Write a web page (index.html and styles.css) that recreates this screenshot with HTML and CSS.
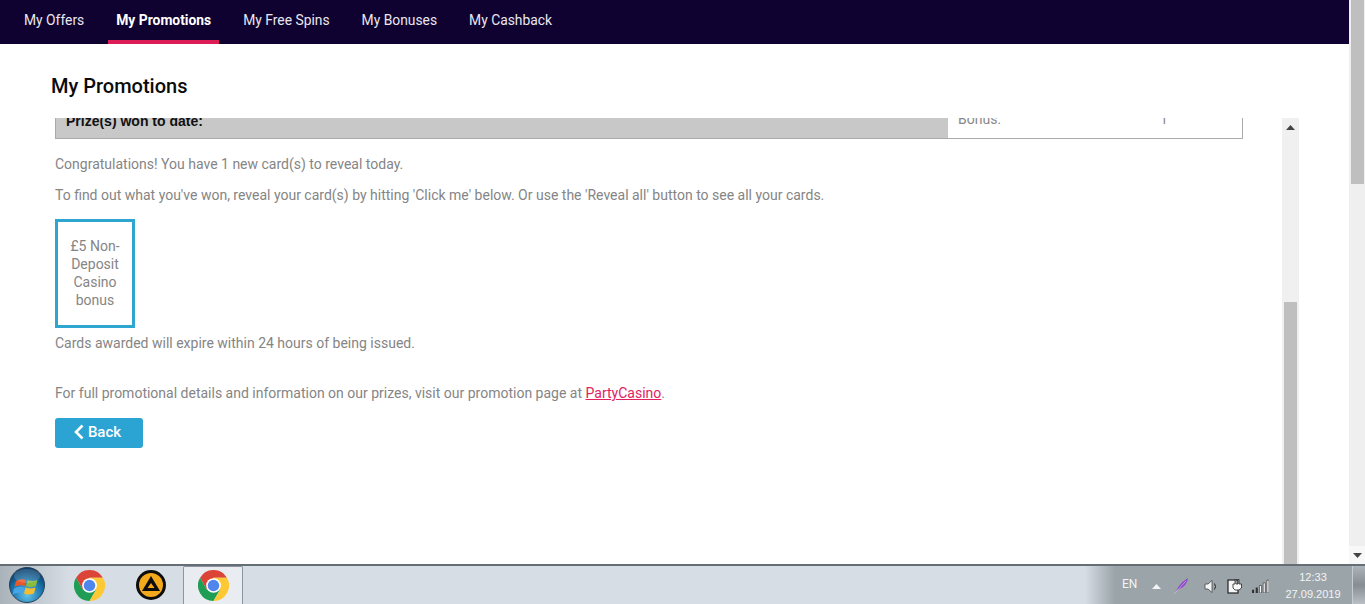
FILE: index.html
```html
<!DOCTYPE html>
<html lang="en">
<head>
<meta charset="utf-8">
<title>My Promotions</title>
<link rel="stylesheet" href="styles.css">
</head>
<body>
<svg class="defs" width="0" height="0" aria-hidden="true">
  <defs>
    <symbol id="chrome" viewBox="0 0 32 32">
      <path fill="#db4437" d="M2.14 8A16 16 0 0 1 29.86 8H16L9.07 20z"/>
      <path fill="#1f9d55" d="M2.14 8A16 16 0 0 0 16 32l6.93-12H9.07z"/>
      <path fill="#fcc934" d="M29.86 8A16 16 0 0 1 16 32l6.93-12L16 8z"/>
      <circle cx="16" cy="16" r="7.6" fill="#fff"/>
      <circle cx="16" cy="16" r="6" fill="#4f86ec"/>
    </symbol>
  </defs>
</svg>
<div class="window">
  <main class="main">
    <nav class="nav">
      <a class="nav-item">My Offers</a>
      <a class="nav-item active">My Promotions</a>
      <a class="nav-item">My Free Spins</a>
      <a class="nav-item">My Bonuses</a>
      <a class="nav-item">My Cashback</a>
    </nav>
    <h1 class="title">My Promotions</h1>
    <div class="panel">
      <div class="panel-body">
        <div class="summary">
          <div class="summary-label"><span>Prize(s) won to date:</span></div>
          <div class="summary-value"><span class="bonus">Bonus:</span><span class="count">1</span></div>
        </div>
        <p class="copy first">Congratulations! You have 1 new card(s) to reveal today.</p>
        <p class="copy second">To find out what you've won, reveal your card(s) by hitting 'Click me' below. Or use the 'Reveal all' button to see all your cards.</p>
        <div class="card">£5 Non-Deposit Casino bonus</div>
        <p class="copy expire">Cards awarded will expire within 24 hours of being issued.</p>
        <p class="copy details">For full promotional details and information on our prizes, visit our promotion page at <a class="link">PartyCasino</a>.</p>
        <button class="back" type="button">
          <svg class="back-icon" viewBox="0 0 10 16" width="10" height="16"><path d="M8.5 1.500 2 8l6.500 6.500" fill="none" stroke="#fff" stroke-width="2.600"/></svg>
          Back
        </button>
      </div>
      <div class="inner-scroll">
        <svg class="arrow-up" viewBox="0 0 9 5" width="9" height="5"><path d="M4.500 0 9 5H0z" fill="#444"/></svg>
        <div class="inner-thumb"></div>
      </div>
    </div>
  </main>
  <div class="outer-scroll">
    <div class="outer-thumb"></div>
    <div class="outer-arrow">
      <svg viewBox="0 0 9 5" width="9" height="5"><path d="M0 0h9L4.500 5z" fill="#444"/></svg>
    </div>
  </div>
</div>
<footer class="taskbar">
  <div class="start">
    <svg viewBox="0 0 38 38" width="38" height="38">
      <defs>
        <radialGradient id="orb" cx="50%" cy="78%" r="70%">
          <stop offset="0" stop-color="#62c3ea"/>
          <stop offset=".6" stop-color="#1c76ad"/>
          <stop offset="1" stop-color="#0b426f"/>
        </radialGradient>
      </defs>
      <circle cx="19" cy="19" r="17.500" fill="url(#orb)" stroke="#2a4055"/>
      <path d="M8 15q5-3 10-1l-1.500 6q-5-2-10 1z" fill="#e8562a"/>
      <path d="M19.500 14q5 2 10 0l-1.500 6q-5 2-10 0z" fill="#8abb3c"/>
      <path d="M6 22.500q5-3 10-1l-1.500 6q-5-2-10 1z" fill="#45a5e6"/>
      <path d="M17.500 21.500q5 2 10 0l-1.500 6q-5 2-10 0z" fill="#f6bb30"/>
      <ellipse cx="19" cy="10" rx="13" ry="7" fill="#fff" opacity=".16"/>
    </svg>
  </div>
  <div class="task"><svg width="31" height="31"><use href="#chrome"/></svg></div>
  <div class="task">
    <svg viewBox="0 0 30 30" width="30" height="30">
      <circle cx="15" cy="15" r="15" fill="#0d0d0d"/>
      <circle cx="15" cy="15" r="12" fill="#f4a81c"/>
      <path d="M15 6 24 21H6zM15 13l-3.500 5h7z" fill="#0d0d0d" fill-rule="evenodd"/>
    </svg>
  </div>
  <div class="task current"><svg width="31" height="31"><use href="#chrome"/></svg></div>
  <div class="tray">
    <span class="lang">EN</span>
    <svg class="tray-up" viewBox="0 0 9 5" width="9" height="5"><path d="M4.500 0 9 5H0z" fill="#f2f4f5"/></svg>
    <svg class="tray-feather" viewBox="0 0 16 16" width="16" height="16"><path d="M1 16 6 8q4-5 9-8-1 6-5 9-3 2-6 3z" fill="#8f45c9"/><path d="M1 16 13 3" stroke="#d8c2ea" stroke-width=".7"/></svg>
    <svg class="tray-sound" viewBox="0 0 14 14" width="14" height="15"><path d="M1 4.500h3L8 1v12L4 9.500H1z" fill="#f4f5f6" stroke="#444" stroke-width=".8"/><path d="M10.500 4q2 3 0 6" fill="none" stroke="#222" stroke-width="1"/></svg>
    <svg class="tray-power" viewBox="0 0 16 16" width="16" height="16"><rect x="1" y="2" width="10" height="13" fill="#f4f5f6" stroke="#222" stroke-width="1.200"/><path d="M6 6h2V1.500h1V6h2V1.500h1V6h2.500v4L12 12H8L6 10z" fill="#f8f8f8" stroke="#222" stroke-width=".8"/></svg>
    <svg class="tray-signal" viewBox="0 0 16 13" width="17" height="14"><path d="M0 10h2v3H0zM3.500 8h2v5h-2z" fill="#333"/><path d="M7 6h2v7H7zM10.500 3.500h2V13h-2zM14 1h2v12h-2z" fill="#f4f5f6" stroke="#333" stroke-width=".6"/></svg>
    <div class="clock"><span>12:33</span><span>27.09.2019</span></div>
    <div class="show-desktop"></div>
  </div>
</footer>
</body>
</html>
```
FILE: styles.css
```css
* { box-sizing: border-box; }
html, body { margin: 0; height: 604px; overflow: hidden; }
body {
  display: flex;
  flex-direction: column;
  font-family: Roboto, "Liberation Sans", sans-serif;
  font-size: 14px;
  color: #858585;
  background: #fff;
}
.defs { position: absolute; }
.window { flex: 1; min-height: 0; display: flex; }
.main { flex: 1; min-width: 0; display: flex; flex-direction: column; }

.nav { height: 44px; flex: none; display: flex; padding-left: 8px; background: #0f0230; font-size: 13.850px; }
.nav-item {
  margin: 0 8px;
  padding: 0 8px;
  line-height: 40px;
  color: #e9e7ef;
  border-bottom: 4px solid transparent;
  height: 44px;
}
.nav-item.active { color: #fff; font-weight: 700; border-bottom-color: #dc1c55; }

.title {
  margin: 0;
  height: 74px;
  flex: none;
  padding: 29px 0 0 51px;
  font-size: 20px;
  line-height: 26px;
  font-weight: 500;
  color: #0b0b0b;
}

.panel { flex: 1; min-height: 0; display: flex; }
.panel-body { width: 1282px; padding-left: 55px; overflow: hidden; }

.summary {
  width: 1188px;
  height: 21px;
  display: flex;
  overflow: hidden;
  border: 1px solid #aaa;
  border-top: 0;
}
.summary-label {
  width: 892px;
  padding: 0 0 7px 10px;
  display: flex;
  align-items: flex-end;
  background: #c8c8c8;
  color: #111;
  font-family: "Liberation Sans", Arial, sans-serif;
  font-weight: 700;
  line-height: 20px;
}
.summary-value {
  flex: 1;
  display: flex;
  align-items: flex-end;
  padding: 0 0 9px 10px;
  line-height: 20px;
  color: #888;
}
.bonus { width: 202px; }

.copy { margin: 0; line-height: 20px; white-space: nowrap; }
.first { margin-top: 15px; }
.second { margin-top: 11px; }
.expire { margin-top: 5px; }
.details { margin-top: 30px; }
.link { color: #e2215f; text-decoration: underline; }

.card {
  width: 80px;
  height: 109px;
  margin-top: 14px;
  padding: 0 3px 2px;
  display: flex;
  align-items: center;
  text-align: center;
  line-height: 18px;
  border: 3px solid #2fa6cf;
}

.back {
  width: 88px;
  height: 30px;
  margin-top: 15px;
  padding: 0 3px 3px 0;
  display: flex;
  align-items: center;
  justify-content: center;
  gap: 4px;
  border: 0;
  border-radius: 3px;
  background: #2ba3d3;
  color: #fff;
  font: 500 15px Roboto, "Liberation Sans", sans-serif;
}

.inner-scroll {
  width: 17px;
  display: flex;
  flex-direction: column;
  align-items: center;
  padding: 7px 2px 0;
  background: #f0f0f0;
}
.inner-thumb { width: 13px; height: 262px; margin-top: auto; background: #bfbfbf; }

.outer-scroll {
  width: 16px;
  flex: none;
  display: flex;
  flex-direction: column;
  align-items: center;
  background: #efefef;
}
.outer-thumb { width: 13px; height: 184px; background: #bfbfbf; }
.outer-arrow {
  margin-top: auto;
  width: 16px;
  height: 18px;
  display: flex;
  align-items: center;
  justify-content: center;
  background: #f8f8f8;
}

.taskbar {
  height: 40px;
  flex: none;
  display: flex;
  align-items: center;
  border-top: 2px solid #656e74;
  background: linear-gradient(90deg, #aab3ba 0, #d6dde5 70px, #d6dde5 1085px, #9ba4a9 1115px, #9ba4a9 100%);
}
.start { width: 59px; padding-left: 8px; display: flex; flex: none; }
.task { width: 60px; height: 38px; margin-right: 2px; display: flex; align-items: center; justify-content: center; flex: none; }
.current {
  border: 1px solid #8d949b;
  border-bottom: 0;
  border-radius: 2px 2px 0 0;
  background: #e9edf2;
}
.tray { margin-left: auto; height: 38px; padding-top: 2px; display: flex; align-items: center; color: #f2f4f5; }
.lang { font-size: 12px; width: 22px; margin-top: -4px; }
.tray-up { margin-left: 8px; }
.tray-feather { margin-left: 12px; }
.tray-sound { margin-left: 15px; }
.tray-power { margin-left: 9px; }
.tray-signal { margin-left: 9px; }
.clock {
  width: 82px;
  margin-left: 1px;
  padding-left: 4px;
  display: flex;
  flex-direction: column;
  align-items: center;
  font-family: "Liberation Sans", sans-serif;
  font-size: 11px;
  line-height: 17px;
}
.show-desktop {
  width: 13px;
  height: 38px;
  align-self: flex-start;
  margin-top: -2px;
  border-left: 1px solid #c7ccd0;
  background: linear-gradient(180deg, #acb4b9, #868e93 50%, #b9bfc4);
}
```
